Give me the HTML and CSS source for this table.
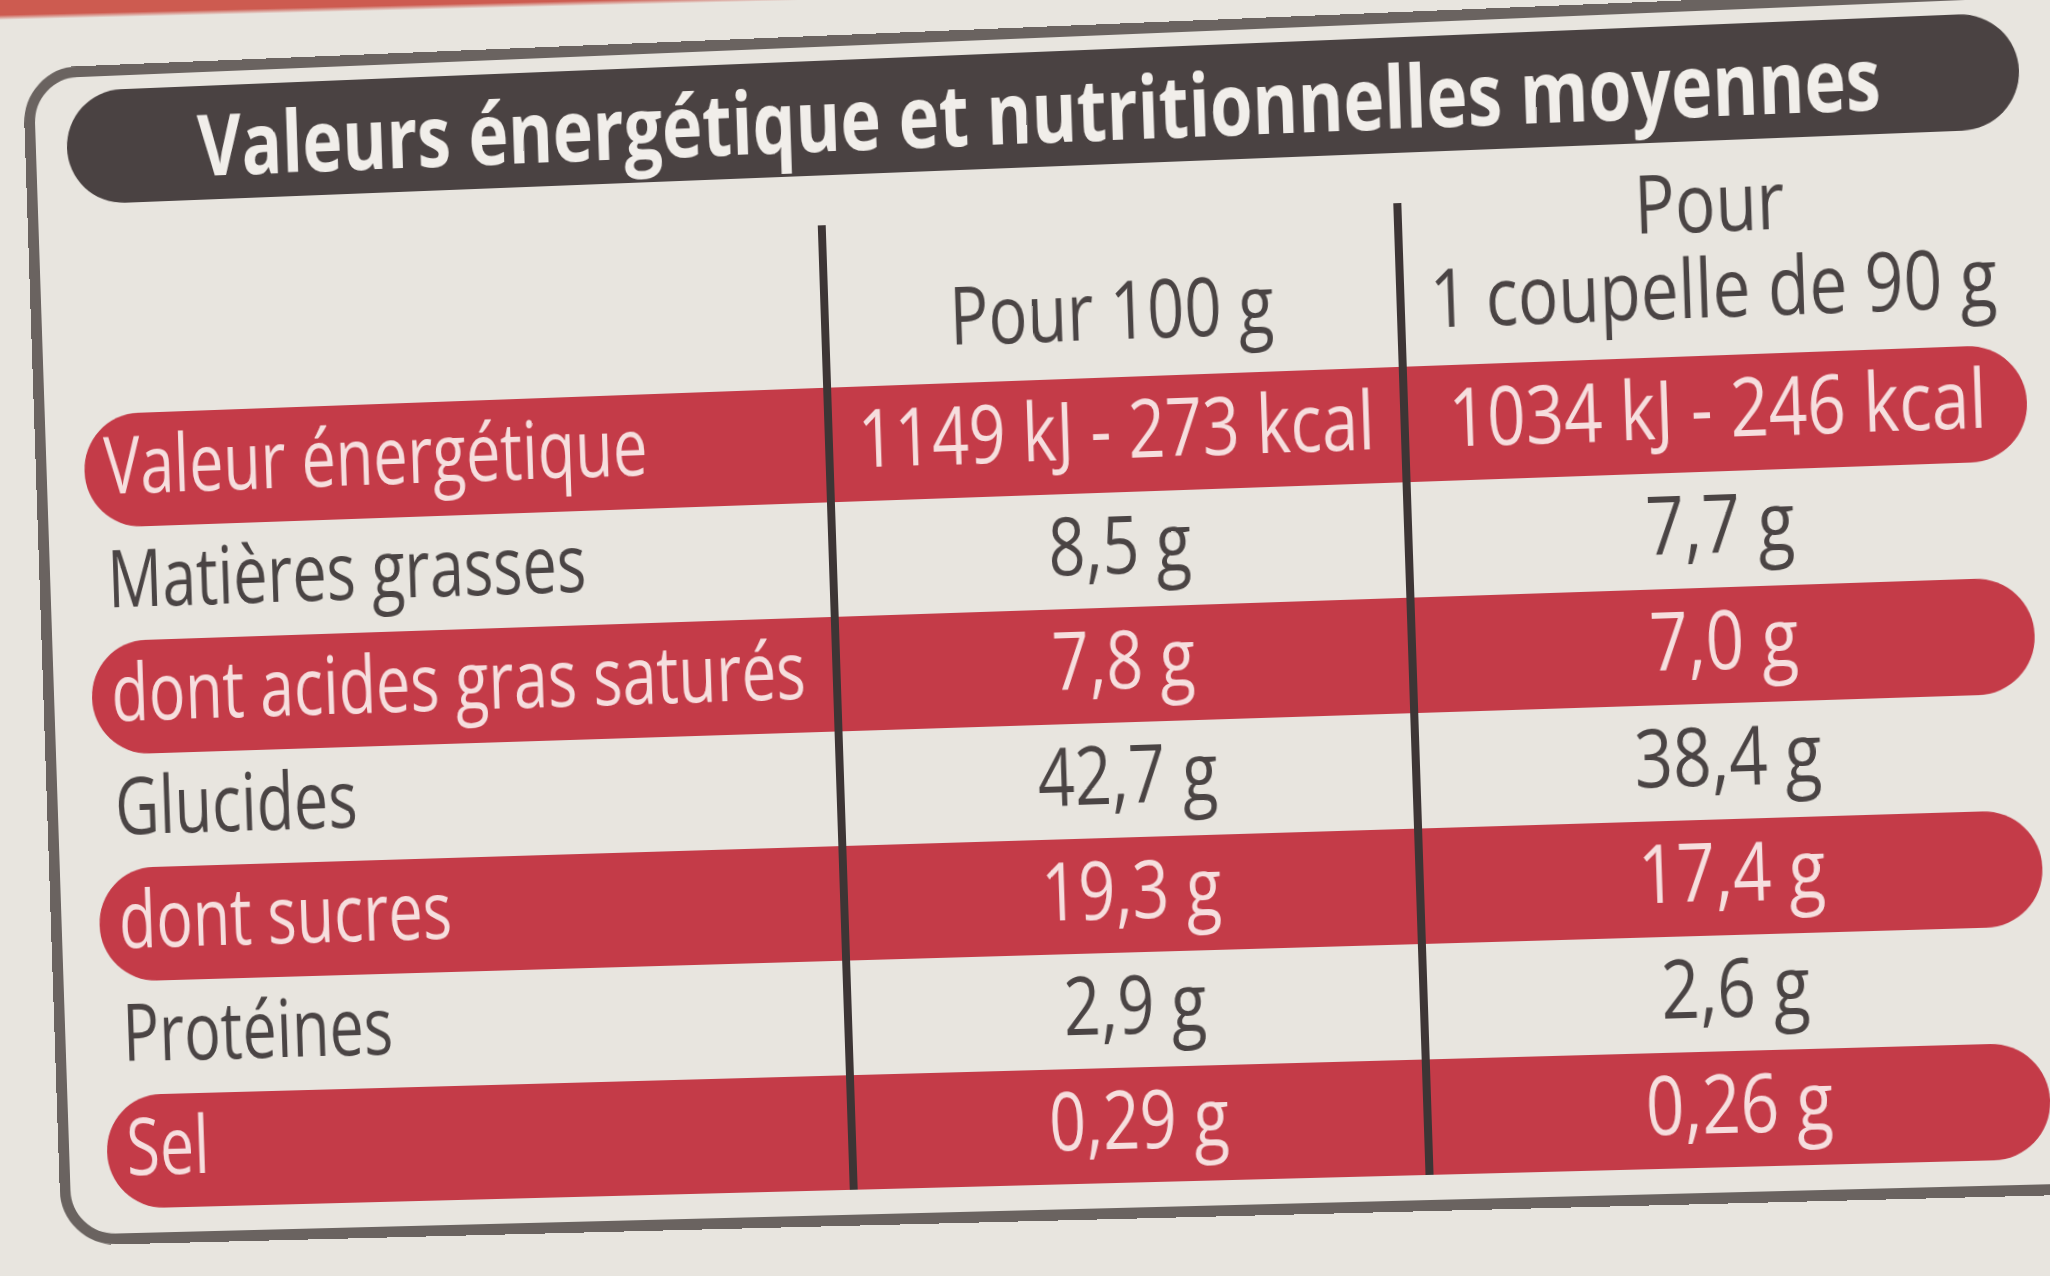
FILE: index.html
```html
<!DOCTYPE html>
<html lang="fr">
<head>
<meta charset="utf-8">
<title>Valeurs nutritionnelles</title>
<link rel="stylesheet" href="styles.css">
</head>
<body>
<div class="label">
  <div class="title"><span class="tt">Valeurs énergétique et nutritionnelles moyennes</span></div>
  <div class="grid">
    <div class="row head">
      <div class="c1"></div>
      <div class="c2"><span class="sq">Pour 100 g</span></div>
      <div class="c3"><span class="sq">Pour</span><span class="sq">1 coupelle de 90 g</span></div>
    </div>
    <div class="row red">
      <div class="c1"><span class="sl">Valeur énergétique</span></div>
      <div class="c2"><span class="sq">1149 kJ - 273 kcal</span></div>
      <div class="c3"><span class="sq">1034 kJ - 246 kcal</span></div>
    </div>
    <div class="row">
      <div class="c1"><span class="sl">Matières grasses</span></div>
      <div class="c2"><span class="sq">8,5 g</span></div>
      <div class="c3"><span class="sq">7,7 g</span></div>
    </div>
    <div class="row red">
      <div class="c1"><span class="sl">dont acides gras saturés</span></div>
      <div class="c2"><span class="sq">7,8 g</span></div>
      <div class="c3"><span class="sq">7,0 g</span></div>
    </div>
    <div class="row">
      <div class="c1"><span class="sl">Glucides</span></div>
      <div class="c2"><span class="sq">42,7 g</span></div>
      <div class="c3"><span class="sq">38,4 g</span></div>
    </div>
    <div class="row red">
      <div class="c1"><span class="sl">dont sucres</span></div>
      <div class="c2"><span class="sq">19,3 g</span></div>
      <div class="c3"><span class="sq">17,4 g</span></div>
    </div>
    <div class="row">
      <div class="c1"><span class="sl">Protéines</span></div>
      <div class="c2"><span class="sq">2,9 g</span></div>
      <div class="c3"><span class="sq">2,6 g</span></div>
    </div>
    <div class="row red">
      <div class="c1"><span class="sl">Sel</span></div>
      <div class="c2"><span class="sq">0,29 g</span></div>
      <div class="c3"><span class="sq">0,26 g</span></div>
    </div>
  </div>
</div>
</body>
</html>
```

FILE: styles.css
```css
html, body {
  margin: 0;
}
body {
  box-sizing: border-box;
  width: 2050px;
  height: 1276px;
  overflow: hidden;
  padding: 26px 0 0 26px;
  background: linear-gradient(178.6deg, #cd5b50 0, #cd5b50 15px, #e8e5df 20px, #e8e5df 100%);
  font-family: "Open Sans", "Noto Sans", sans-serif;
  color: #4a4444;
}
.label {
  box-sizing: border-box;
  width: 2090px;
  height: 1194px;
  border: 11px solid #6a6360;
  border-radius: 56px;
  transform-origin: 50% 50%;
  transform: rotate(-1.9deg) perspective(4000px) rotateY(-3deg);
}
.title {
  box-sizing: border-box;
  margin: 14px 0 0 32px;
  width: 1957px;
  height: 115px;
  padding-left: 134px;
  border-radius: 58px;
  background: #4a4242;
  color: #f1eeea;
  font-weight: 700;
  font-size: 86px;
  line-height: 115px;
  white-space: nowrap;
}
.tt {
  display: inline-block;
  transform: scaleX(0.8);
  transform-origin: 0 50%;
}
.grid {
  margin-left: 39px;
  width: 1947px;
  font-size: 81px;
}
.row {
  display: flex;
  height: 115px;
  line-height: 100px;
}
.row.head {
  height: 163px;
  margin-top: 50px;
  line-height: 85px;
}
.red {
  background: #c43b48;
  border-radius: 57px;
  color: #f6dede;
}
.c1 {
  box-sizing: border-box;
  width: 754px;
  padding-left: 20px;
  white-space: nowrap;
}
.c2, .c3 {
  box-sizing: border-box;
  display: flex;
  justify-content: center;
  align-items: flex-start;
  border-left: 8px solid #3d3535;
}
.c2 {
  width: 576px;
}
.c3 {
  width: 617px;
}
.head .c2, .head .c3 {
  flex-direction: column;
  justify-content: flex-end;
  align-items: center;
  padding-bottom: 27px;
}
.sl {
  display: inline-block;
  transform: scaleX(0.77);
  transform-origin: 0 50%;
}
.sq {
  display: inline-block;
  white-space: nowrap;
  transform: scaleX(0.8);
}
.c3 .sq {
  transform: scaleX(0.82);
}
```
